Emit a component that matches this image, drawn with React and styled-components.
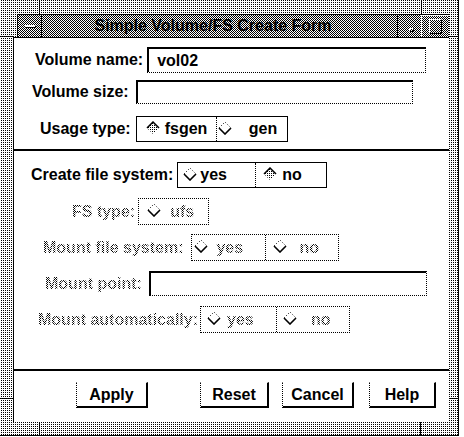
import React, { useId } from 'react';
import styled, { createGlobalStyle, css } from 'styled-components';

const GlobalStyle = createGlobalStyle`
  html, body { margin: 0; padding: 0; background: #fff; }
  body {
    font-family: "Liberation Sans", Arial, Helvetica, sans-serif;
    font-weight: bold;
    font-size: 16px;
    color: #000;
  }
  * { box-sizing: border-box; }
`;

const dotFill = css`
  background-color: #fff;
  background-image: conic-gradient(#000 0 25%, #fff 0 100%);
  background-size: 2px 2px;
`;

const checkerFill = css`
  background-color: #fff;
  background-image: repeating-conic-gradient(#000 0 25%, #fff 0 50%);
  background-size: 2px 2px;
`;

const stippleText = css`
  color: transparent;
  background-image: repeating-conic-gradient(#000 0 25%, transparent 0 50%);
  background-size: 2px 2px;
  -webkit-background-clip: text;
  background-clip: text;
`;

const Frame = styled.div`
  position: relative;
  width: 459px;
  height: 436px;
  ${dotFill}
  border-right: 1px solid #000;
  border-bottom: 1px solid #000;
  padding: 14px 9px 13px 13px;
  display: flex;
  flex-direction: column;
`;

const CornerMark = styled.span`
  position: absolute;
  left: ${(p) => p.$x}px;
  top: ${(p) => p.$y}px;
  width: ${(p) => p.$w}px;
  height: ${(p) => p.$h}px;
  background: #000;
`;

const TitleBar = styled.div`
  height: 23px;
  margin-left: 4px;
  border-top: 1px solid #000;
  border-left: 1px solid #000;
  ${checkerFill}
  display: flex;
  align-items: stretch;
`;

const MenuButton = styled.div`
  width: 24px;
  border-right: 1px solid #000;
  display: flex;
  align-items: center;
  justify-content: center;
  padding-left: 2px;
`;

const MenuGlyph = styled.span`
  display: block;
  width: 11px;
  height: 3px;
  border-top: 1px solid #fff;
  border-bottom: 1px solid #000;
  border-right: 1px solid #000;
  background: #fff;
`;

const TitleText = styled.div`
  flex: 1;
  display: flex;
  align-items: center;
  justify-content: center;
  padding-right: 13px;
  white-space: nowrap;
`;

const MinButton = styled.div`
  width: 24px;
  border-left: 1px solid #000;
  display: flex;
  align-items: flex-end;
  justify-content: center;
  padding: 0 0 5px 4px;
`;

const MinGlyph = styled.span`
  display: block;
  width: 5px;
  height: 4px;
  border-top: 1px solid #fff;
  border-left: 1px solid #fff;
  border-bottom: 1px solid #000;
  border-right: 1px solid #000;
`;

const MaxButton = styled.div`
  width: 28px;
  box-shadow: inset 1px 1px 0 #fff;
  display: flex;
  align-items: center;
  justify-content: center;
`;

const MaxGlyph = styled.span`
  display: block;
  width: 13px;
  height: 15px;
  border-top: 1px solid #fff;
  border-left: 1px solid #fff;
  border-bottom: 1px solid #000;
  border-right: 1px solid #000;
`;

const Content = styled.div`
  flex: 1;
  background: #fff;
  border-top: 1px solid #000;
  border-left: 1px solid #000;
  display: flex;
  flex-direction: column;
`;

const Row = styled.div`
  display: flex;
  align-items: center;
  margin-top: ${(p) => p.$top}px;
  padding-left: ${(p) => p.$indent}px;
  gap: ${(p) => p.$gap}px;
`;

const Label = styled.span`
  white-space: nowrap;
  line-height: 18px;
  ${(p) => p.$disabled && stippleText}
`;

const TextField = styled.input`
  width: ${(p) => p.$w}px;
  height: ${(p) => p.$h}px;
  margin: 0;
  padding: 0 0 0 8px;
  font: bold 16px "Liberation Sans", Arial, Helvetica, sans-serif;
  color: #000;
  background: #fff;
  border-top: 2px solid #000;
  border-left: 2px solid #000;
  border-bottom: 1px dotted #000;
  border-right: 1px dotted #000;
  border-radius: 0;
  outline: none;
`;

const ToggleBox = styled.div`
  display: flex;
  height: ${(p) => p.$h}px;
  border: 1px ${(p) => (p.$disabled ? 'dotted' : 'solid')} #000;
`;

const Segment = styled.div`
  width: ${(p) => p.$w}px;
  display: flex;
  align-items: center;
  padding-left: ${(p) => p.$pad}px;
  gap: ${(p) => p.$gap}px;
  & + & {
    border-left: 1px ${(p) => (p.$disabled ? 'dotted' : 'solid')} #000;
  }
`;

const SegText = styled.span`
  white-space: nowrap;
  line-height: 18px;
  ${(p) => p.$disabled && stippleText}
`;

const IndicatorSvg = styled.svg`
  flex: none;
  display: block;
  margin-bottom: 3px;
`;

const Separator = styled.div`
  height: 2px;
  background: #000;
  margin-top: ${(p) => p.$top}px;
`;

const ButtonRow = styled.div`
  display: flex;
  margin-top: 11px;
  padding-left: 62px;
`;

const PushButton = styled.button`
  width: ${(p) => p.$w}px;
  height: 26px;
  margin: 0 0 0 ${(p) => p.$ml}px;
  padding: 0;
  font: bold 16px "Liberation Sans", Arial, Helvetica, sans-serif;
  color: #000;
  background: #fff;
  border-top: 1px solid transparent;
  border-left: 1px dotted #000;
  border-right: 2px solid #000;
  border-bottom: 2px solid #000;
  border-radius: 0;
  display: flex;
  align-items: center;
  justify-content: center;
`;

function Indicator({ on }) {
  const id = 'stip' + useId().replace(/[^a-zA-Z0-9]/g, '');
  return (
    <IndicatorSvg width="14" height="14" viewBox="0 0 14 14">
      <defs>
        <pattern id={id} width="2" height="2" patternUnits="userSpaceOnUse">
          <rect width="1" height="1" fill="#000" />
        </pattern>
      </defs>
      {on ? (
        <>
          <path d="M7 1 L13 7 L7 13 L1 7 Z" fill={`url(#${id})`} />
          <path d="M1 7 L7 1 L13 7" fill="none" stroke="#000" strokeWidth="1.5" />
        </>
      ) : (
        <>
          <path d="M1 7 L7 1 L13 7" fill="none" stroke="#000" strokeWidth="1" strokeDasharray="1 2" />
          <path d="M1 7 L7 13 L13 7" fill="none" stroke="#000" strokeWidth="1.6" />
        </>
      )}
    </IndicatorSvg>
  );
}

function Toggle({ items, h, disabled }) {
  return (
    <ToggleBox $h={h} $disabled={disabled}>
      {items.map((it) => (
        <Segment key={it.label} $w={it.w} $pad={it.pad} $gap={it.gap} $disabled={disabled}>
          <Indicator on={it.on} />
          <SegText $disabled={disabled}>{it.label}</SegText>
        </Segment>
      ))}
    </ToggleBox>
  );
}

export default function App() {
  return (
    <>
      <GlobalStyle />
      <Frame>
        <CornerMark $x={39} $y={0} $w={1} $h={14} />
        <CornerMark $x={421} $y={0} $w={1} $h={14} />
        <CornerMark $x={39} $y={422} $w={1} $h={13} />
        <CornerMark $x={420} $y={422} $w={1} $h={13} />
        <CornerMark $x={0} $y={36} $w={13} $h={1} />
        <CornerMark $x={0} $y={398} $w={13} $h={1} />
        <CornerMark $x={449} $y={36} $w={9} $h={1} />
        <CornerMark $x={449} $y={398} $w={9} $h={1} />

        <TitleBar>
          <MenuButton><MenuGlyph /></MenuButton>
          <TitleText>Simple Volume/FS Create Form</TitleText>
          <MinButton><MinGlyph /></MinButton>
          <MaxButton><MaxGlyph /></MaxButton>
        </TitleBar>

        <Content>
          <Row $top={9} $indent={21} $gap={4}>
            <Label>Volume name:</Label>
            <TextField $w={279} $h={26} defaultValue="vol02" readOnly />
          </Row>
          <Row $top={7} $indent={18} $gap={7}>
            <Label>Volume size:</Label>
            <TextField $w={277} $h={24} defaultValue="" readOnly />
          </Row>
          <Row $top={12} $indent={26} $gap={5}>
            <Label>Usage type:</Label>
            <Toggle
              h={26}
              items={[
                { label: 'fsgen', on: true, w: 79, pad: 9, gap: 5 },
                { label: 'gen', on: false, w: 71, pad: 1, gap: 17 },
              ]}
            />
          </Row>

          <Separator $top={7} />

          <Row $top={11} $indent={17} $gap={4}>
            <Label>Create file system:</Label>
            <Toggle
              h={26}
              items={[
                { label: 'yes', on: false, w: 77, pad: 5, gap: 3 },
                { label: 'no', on: true, w: 71, pad: 7, gap: 5 },
              ]}
            />
          </Row>
          <Row $top={10} $indent={58} $gap={3}>
            <Label $disabled>FS type:</Label>
            <Toggle
              h={27}
              disabled
              items={[{ label: 'ufs', on: false, w: 69, pad: 8, gap: 9 }]}
            />
          </Row>
          <Row $top={9} $indent={29} $gap={8}>
            <Label $disabled>Mount file system:</Label>
            <Toggle
              h={27}
              disabled
              items={[
                { label: 'yes', on: false, w: 73, pad: 2, gap: 8 },
                { label: 'no', on: false, w: 73, pad: 7, gap: 12 },
              ]}
            />
          </Row>
          <Row $top={10} $indent={31} $gap={7}>
            <Label $disabled>Mount point:</Label>
            <TextField $w={278} $h={25} defaultValue="" readOnly />
          </Row>
          <Row $top={10} $indent={24} $gap={2}>
            <Label $disabled>Mount automatically:</Label>
            <Toggle
              h={27}
              disabled
              items={[
                { label: 'yes', on: false, w: 75, pad: 6, gap: 6 },
                { label: 'no', on: false, w: 73, pad: 6, gap: 14 },
              ]}
            />
          </Row>

          <Separator $top={36} />

          <ButtonRow>
            <PushButton $w={72} $ml={0}>Apply</PushButton>
            <PushButton $w={69} $ml={52}>Reset</PushButton>
            <PushButton $w={72} $ml={13}>Cancel</PushButton>
            <PushButton $w={67} $ml={15}>Help</PushButton>
          </ButtonRow>
        </Content>
      </Frame>
    </>
  );
}
